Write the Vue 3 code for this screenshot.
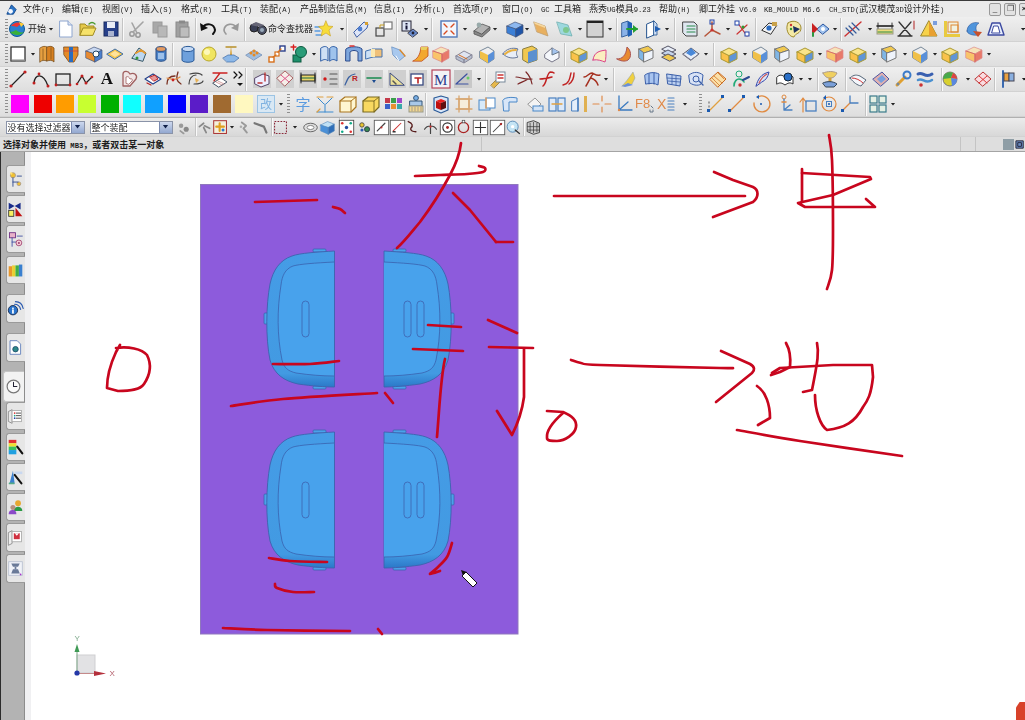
<script setup>
const P = (d, f = 'none', s = 'none', w = 1) => `<path d="${d}" fill="${f}" stroke="${s}" stroke-width="${w}" stroke-linejoin="round" stroke-linecap="round"/>`
const L = (d, s = '#333', w = 1.5) => P(d, 'none', s, w)
const R = (x, y, w, h, f, s = 'none', sw = 1) => `<rect x="${x}" y="${y}" width="${w}" height="${h}" fill="${f}" stroke="${s}" stroke-width="${sw}"/>`
const C = (x, y, r, f, s = 'none', w = 1) => `<circle cx="${x}" cy="${y}" r="${r}" fill="${f}" stroke="${s}" stroke-width="${w}"/>`
const cube = (t, f, s, o = '#44557a') => P('M2 7L10 3l8 3-7 4z', t, o, .7) + P('M2 7l9 3v8l-9-4z', f, o, .7) + P('M11 10l7-4v8l-7 4z', s, o, .7)
const box = (inner) => R(1.5, 1.5, 17, 17, '#fff', '#555') + inner

const I = {
  start: C(10, 10, 7.5, '#2a7fd0', '#0d5a9c') + P('M4 7c3-4 9-5 13-1-3-1-5 0-7 2-2-1-4-1-6-1z', '#e33') + P('M3 13c3 3 9 5 14 0-3 1-6 0-8-2-2 1-4 2-6 2z', '#3ab03a') + P('M12 3l5 2-3 3z', '#fc3'),
  doc: P('M4 2h8l4 4v12H4z', '#fff', '#8ea6d0') + P('M12 2v4h4', '#dce4f2', '#8ea6d0'),
  open: P('M2 16V5h5l2 2h7v3', '#e5c84a', '#a08a20') + P('M2 16l3-7h13l-3 7z', '#f6e26a', '#a08a20') + L('M11 5c2-2 4-2 6 0', '#4a9a30', 1.3),
  save: R(3, 3, 14, 14, '#27408a', '#182a60') + R(6, 3, 8, 6, '#e8ecf6') + R(7, 12, 6, 5, '#aab4d0'),
  cut: C(5, 15, 2.2, 'none', '#9a9a9a', 1.5) + C(11, 16, 2.2, 'none', '#9a9a9a', 1.5) + L('M6 13L16 3M10 14L5 4', '#a4a4a4', 1.6),
  copy: R(3, 3, 9, 11, '#a8a8a8', '#9a9a9a') + R(8, 7, 9, 11, '#b8b8b8', '#9a9a9a'),
  paste: R(4, 3, 12, 15, '#a0a0a0', '#8a8a8a') + R(8, 8, 9, 10, '#bdbdbd', '#8a8a8a') + R(7, 1.5, 6, 3, '#8a8a8a'),
  undo: L('M5 8c3-4 11-4 12 3 0 2-1 3-2 4', '#111', 2) + P('M2 4l1 8 7-3z', '#111'),
  redo: L('M15 8c-3-4-11-4-12 3 0 2 1 3 2 4', '#999', 1.7) + P('M18 4l-1 8-7-3z', '#999'),
  binoc: C(6, 9, 4, '#3a3f55', '#222') + C(14, 11, 4.4, '#4a5064', '#222') + C(14, 11, 2, '#9ab') + P('M2 6l6-3 8 3-4 2z', '#667'),
  star: L('M1 8h5M1 12h5M2 16h6', '#5a9be0', 1.3) + P('M12 2l2 5 5 .5-4 3.5 1.5 6-4.5-3-5 3 1.5-6-4-3.5 5-.5z', '#f7dc3a', '#c8a020', .6),
  pan: P('M3 13L13 3l4 2-1 4L6 18z', '#dfe6f7', '#4060a8') + C(9, 10, 2.4, '#4f7fd0') + R(14, 3, 3, 3, '#d8a030'),
  frames: R(2, 9, 8, 8, 'none', '#444', 1.2) + R(10, 3, 8, 7, '#fff', '#777', 1.2) + L('M6 9V6h4', '#c8a020', 1),
  info: R(2, 2, 9, 10, '#dde4f4', '#223') + R(5.5, 4, 2, 1.5, '#113') + R(5.5, 6.5, 2, 4, '#113') + P('M8 14l5-4 5 4-5 4z', '#6a8dcf', '#223', .8) + C(13, 14, 1.4, '#223'),
  fit: R(2, 2, 16, 16, '#f3f6fc', '#5078b8', 1.4) + L('M5 5l3 3M15 5l-3 3M5 15l3-3M15 15l-3-3', '#d84a20', 1.4),
  printer: P('M2 12l8-7 8 3-8 7z', '#b4b4b4', '#555', .8) + P('M2 12v3l8 3 8-7V8l-8 7z', '#888', '#555', .8) + C(7, 6, 2.4, '#9aa'),
  bluecube: cube('#8db8ef', '#3b7fd6', '#1f55a8'),
  orangecard: P('M3 3l11 4 3 10-11-4z', '#e8b060', '#bb9a6a', .7) + P('M3 3l11 4v2L4 5z', '#f5d8a0'),
  tealcard: P('M3 3l11 3 4 11L7 15z', '#9dd8de', '#6aa', .7) + P('M10 7l6 9', '#fff') + C(12, 11, 3, '#7dc78e'),
  greybox: R(2, 2, 16, 16, '#d2d2d2', '#333') + R(2, 2, 16, 2, '#222'),
  frontin: P('M3 4l6-2v14l-6 2z', '#8ab2e8', '#1c4a8c', .8) + P('M9 2l4 2v12l-4 2z', '#1f5fb5') + L('M8 10h10', '#22a030', 2) + P('M14 6l5 4-5 4z', '#22a030'),
  frontout: P('M4 5l7-3v14l-7 3z', '#fff', '#25548f') + P('M11 2l3 3v11l-3 0z', '#cfe0f5', '#25548f', .8) + P('M12 7l6 3-6 3z', '#1f5fb5'),
  layers: P('M3 3h11l3 3v11H6l-3-3z', '#dfe7f0', '#444') + L('M7 7h8M7 10h8M7 13h8', '#2a8a4a', 1.2),
  wcs: L('M10 11V3M10 11l-7 6M10 11l8 4', '#b6553a', 1.5) + R(8, 1, 4, 4, 'none', '#24a') + C(10, 11, 1.6, '#c33'),
  wcsnode: L('M5 3l10 14M15 6L5 15', '#c33', 1.2) + R(3, 2, 4, 4, '#fff', '#24a') + R(13, 13, 4, 4, '#fff', '#24a') + C(11, 8, 1.6, '#393'),
  eye: P('M2 11l7-7 8 2-6 9z', '#f4f4f4', '#333') + C(9, 9, 2.6, '#2a6bc0') + R(12, 3, 5, 4, '#c9a24a'),
  palette: P('M4 4c5-4 13-1 13 5s-6 5-7 9c-6 0-9-9-6-14z', '#f4e9a6', '#a08c30') + P('M9 7l7 3-6 4z', '#1d2f5f') + C(7, 6, 1.2, '#c33') + C(7, 10, 1.2, '#393'),
  arrowdiamond: P('M7 10l6-5 6 5-6 5z', '#9fc2ee', '#2855a0') + C(13, 10, 2, '#fff') + P('M2 4l6 6-6 6z', '#c82020') + L('M3 14v3', '#2a9a40', 2),
  hatch: L('M2 17L18 3', '#c33', 1.4) + L('M3 9l7 7M6 7l7 7M9 4l7 7', '#345a9a', 1.2),
  dim: L('M2 7h16', '#111', 1.5) + L('M3 4v6M17 4v6', '#333', 1) + R(2, 10, 16, 5, '#eedc7a', '#998') + L('M3 13h14', '#2a8a4a', 1),
  xsec: L('M3 3l12 14M15 3L3 17M2 17h14', '#333', 1.3) + L('M18 2v8', '#b44', 1.2),
  pyramid: P('M10 2l8 15H2z', '#f7d24a', '#9c8520') + P('M10 2v15h8z', '#e8a030') + R(14, 2, 4, 4, '#7a9ede'),
  rcube: R(2, 2, 3, 16, '#e8ca40') + R(2, 15, 16, 3, '#e8ca40') + R(6, 3, 10, 10, '#f1f1e0', '#d83') + R(9, 6, 7, 7, 'none', '#d83'),
  halfsphere: P('M3 12c0-6 6-10 12-8-4 2-4 8 0 12-6 1-12-1-12-4z', '#5095dc', '#244a8c', .5) + P('M9 12l9 1-4 5z', '#c8502a'),
  trapez: P('M6 4h8l4 12H2z', '#e8eefc', '#3c4aa0', 1.4) + P('M8 7h4l2 7H6z', '#fff', '#3c4aa0'),
  plane: R(3, 3, 14, 14, '#fff', '#222', 1.2) + R(3.5, 15.5, 13.5, 2, '#888'),
  block1: P('M3 4c3-2 5-2 7-1v14c-3-1-5-1-7 1z', '#e7a040', '#7a5020', .8) + P('M10 3c3-1 5-1 7 1v14c-2-2-4-2-7-1z', '#d88020', '#7a5020', .8) + L('M6 5v11M14 4v11', '#8a5a20', .8),
  block2: P('M3 3h14v8l-4 7H8l-5-7z', '#e58a28', '#7a4a18', .8) + R(8, 3, 4, 15, '#2a6cc0') + L('M3 7h14', '#c33', .7),
  block3: cube('#c8d8f2', '#e88a30', '#4a80cf') + C(12, 10, 3, '#fff', '#246'),
  block4: P('M2 10l8-5 8 5-8 5z', '#f4c44a', '#3d6ea8') + P('M5 10l5-3 5 3-5 3z', '#ffe39a'),
  block5: P('M3 14L10 4l7 5-3 8z', '#bdd7f0', '#356') + P('M7 9l5-3 4 3', 'none', '#e59a30', 2) + C(8, 14, 1.5, '#393'),
  cyl: P('M5 5v10c0 3 10 3 10 0V5', '#4a82c8', '#2a4f88') + `<ellipse cx="10" cy="5" rx="5" ry="2.4" fill="#e49a60" stroke="#2a4f88"/>` + R(7, 9, 6, 6, '#9cc0ea'),
  cyl2: P('M4 5v11c0 3 12 3 12 0V5', '#6ea0dc', '#2a5a98') + `<ellipse cx="10" cy="5" rx="6" ry="2.6" fill="#c5daf5" stroke="#2a5a98"/>`,
  sphere: C(10, 10, 7, '#f0e560', '#b9a62a') + C(8, 8, 3, '#fdf8b8'),
  cone: P('M10 2L9 11h2z', '#d8a030') + L('M5 3h10', '#b8902a', 1.4) + P('M2 14l5-3h6l5 3-5 4H6z', '#8db8e8', '#3e6aa6', .7),
  dots: P('M2 11l8-5 8 5-8 5z', '#9ebddf', '#57a', .6) + C(7, 9, 1.5, '#e88a20') + C(10, 7, 1.5, '#e88a20') + C(13, 9, 1.5, '#e88a20') + C(10, 11, 1.5, '#e88a20'),
  chain: R(2, 13, 5, 5, '#fff', '#d8701a', 1.4) + R(8, 8, 4, 4, '#fff', '#d8701a', 1.2) + R(13, 2, 5, 5, '#fff', '#2c3f8a', 1.4) + L('M6 13l3-2M11 8l3-3', '#d8701a', 1.3),
  hole: R(4, 11, 8, 7, '#1d8f6b', '#0c5a40') + C(12, 8, 5.5, '#2a9c78', '#0c5a40') + L('M2 3h5M4.500 1v5', '#d82020', 1.4),
  book1: P('M2 4c3-2 5-2 7 0v13c-2-2-4-2-7 0z', '#cfe0f5', '#2f5ea6') + P('M11 4c2-2 4-2 7 0v13c-3-2-5-2-7 0z', '#9fc3ec', '#2f5ea6'),
  book2: P('M2 5c3-3 13-3 16 0v12h-4V8c-2-2-6-2-8 0v9H2z', '#7ea7dd', '#2a4a8c') + L('M6 2h4', '#d33', 1.5),
  split: P('M2 7l7-2v8l-7 2z', '#cde0f5', '#4472b0') + P('M9 5l9 0v8l-9 0z', '#f0c078', '#4472b0') + R(7, 5, 4, 8, '#fbe8b0'),
  blade: P('M4 3l8 3 5 6-6 5-6-6z', '#a8c8ee', '#4a7ab8', .6) + P('M12 6l5 6', '#fff', '#d88a30', 1.4) + P('M8 12l3 5', 'none', '#fff', 1),
  shoe: P('M3 17c4-2 7-5 8-14h7v9l-6 5z', '#f2a830', '#c04a18', .8) + P('M11 3h7l-2 3h-5z', '#e8d060'),
  cage: cube('#f6e3b8', '#f9c46a', '#e87a6a', '#d88') + L('M2 7l9 3v8', '#c55', .6),
  slab: P('M2 12l8-5 8 4-8 5z', '#dfe4f0', '#889') + P('M2 12v3l8 4v-3zM10 16v3l8-5v-3z', '#b8c0d0', '#889') + L('M5 11l8 4', '#d87020', 1),
  tray: P('M3 7l8-4 6 4v8l-6 4-8-5z', '#eee', '#789') + P('M3 7l8 4v8l-8-5z', '#f0c048') + P('M11 11l6-4v8l-6 4z', '#5a90d8'),
  trim: P('M3 10c2-5 10-7 15-5-2 3-2 6 0 8-5 2-11 1-15-3z', '#e8eef8', '#679') + P('M5 10c3-3 8-4 11-4', 'none', '#e8b040', 2),
  blockT: P('M3 5l9-3 5 3v11l-9 3-5-3z', '#f0c850', '#8a7d40') + P('M8 8l9-3v11l-9 3z', '#5b90cf'),
  r2a: P('M3 10L10 4l7 4v6l-7 4-7-4z', '#f5f7fb', '#778') + P('M10 4v7l7-3', '#a4c4ee', '#678'),
  ylw: P('M2 8l8-4 8 4-8 4z', '#f9e48a', '#a93') + P('M2 8v7l8 4v-7z', '#fac24a', '#a93') + P('M10 12v7l8-4V8z', '#5f95d6', '#a93'),
  curve1: P('M3 16c1-9 8-9 13-10 0 5 0 9-1 12-3-1-7-3-12-2z', '#fbeec0', '#d48'),
  curve2: P('M3 15c5 0 9-3 10-12 4 3 5 10 1 13-3 2-8 1-11-1z', '#e88a30', '#a55'),
  flap: P('M3 5l9-3 5 4-9 3z', '#f0c850', '#777') + P('M3 5l5 4v9l-5-4z', '#7fb6e6', '#777') + P('M8 9l9-3v8l-9 4z', '#eef3fb', '#777'),
  stack: P('M3 5l6-3 8 4-6 3z', '#e8eef8', '#556') + P('M3 9l6-3 8 4-6 3z', '#c5d4ec', '#556') + P('M3 13l6-3 8 4-6 3z', '#f0c850', '#556'),
  dia: P('M2 10l8-6 8 6-8 6z', '#e8eef8', '#556') + P('M10 4l5 5-5 3-5-3z', '#4a88d8') + L('M2 10l8 6 8-6', '#889', 1),
  line: L('M3 17L17 3', '#222', 1.2) + C(3, 17, 1.6, '#c12020') + C(17, 3, 1.6, '#c12020'),
  arc: L('M3 14C4 5 12 3 17 17', '#222', 1.4) + C(3, 14, 1.5, '#c12020') + C(17, 17, 1.5, '#c12020') + C(8, 5, 1.4, '#c12020'),
  rect: R(3, 5, 14, 11, 'none', '#222', 1.3) + C(3, 16, 1.4, '#c12020') + C(17, 16, 1.4, '#c12020'),
  spl: L('M2 15L7 7l4 7 6-6', '#222', 1.3) + C(7, 7, 1.5, '#c12020') + C(11, 14, 1.5, '#c12020') + C(2, 15, 1.3, '#c12020') + C(17, 8, 1.3, '#c12020'),
  heart: P('M4 17V5c0-3 5-4 7 0 4-2 8 1 6 5l-6 7z', '#f0e5e5', '#a06060', 1.3) + P('M7 14V8c2-1 3 0 4 2 2-1 3 1 2 2l-3 3z', '#fff', '#a06060', .8),
  sheet: P('M2 10l8-5 8 5-8 5z', '#fff', '#23408a', 1.2) + P('M7 8l5-2 3 4-4 2z', '#e89a9a', '#b22') + L('M4 14l4 2', '#b22', 1.2),
  ss1: L('M3 15c0-6 4-8 8-8M14 3c-2 6-2 9 3 12', '#7a3020', 1.3) + L('M3 9c4 1 8 3 13-1', '#e08a40', 1.2) + C(9, 11, 1.4, '#c22'),
  ss2: L('M4 5c7-2 11 0 12 1M3 15c0-5 3-9 7-9M8 15c4 0 8 0 9-3', '#444', 1.2) + P('M9 9l4 2-3 3z', '#e8b050'),
  ss3: L('M3 4h14M10 4l-6 8', '#c22', 1.3) + P('M3 14l8-5 6 4-8 5z', '#fff', '#456') + L('M6 13l6 3M8 12l6 3', '#c88', .8),
  more: L('M4 3l3 3-3 3M9 3l3 3-3 3', '#111', 1.2) + P('M7 14h6l-3 3z', '#111'),
  bxa: R(1, 1, 18, 18, '#cfcfcf') + P('M3 9l8-4 6 2v8l-8 3-6-3z', '#eef', '#546') + L('M13 4v8', '#b33', 1.4) + L('M6 14h4', '#b33'),
  bxb: R(1, 1, 18, 18, '#d0d0d0') + P('M2 9l8-7 8 7-8 8z', '#f5ede8', '#a66') + L('M6 6l8 7M14 6l-8 7', '#d58', 1),
  bxc: R(1, 1, 18, 18, '#cfcfcf') + R(3, 6, 14, 6, '#e8d56a', '#222') + L('M3 9h14', '#1a6a4a', 1.2) + L('M3 4v10M17 4v10', '#222', 1),
  bxd: R(1, 1, 18, 18, '#cfcfcf') + C(5, 10, 1.7, '#d01818') + L('M10 5h7M10 10h7M10 15h7', '#555', 1.2),
  bxe: R(1, 1, 18, 18, '#cfcfcf') + L('M3 16c3-7 4-10 10-11', '#3a60a0', 1.2) + `<text x="10" y="12" font-size="8" font-weight="700" fill="#b22" font-family="Liberation Sans">R</text>`,
  bxf: R(1, 1, 18, 18, '#cfcfcf') + L('M3 9h14', '#1a8a50', 1.6) + P('M8 11h4l-2 3z', '#1a4a90'),
  bxg: R(1, 1, 18, 18, '#cfcfcf') + P('M3 16V4l14 12z', '#eadf9a', '#3a4a80') + L('M6 12l3 3', '#555'),
  bxh: R(1, 1, 18, 18, '#cfcfcf') + R(3, 5, 12, 11, '#fff', '#3a4a80', 1.3) + L('M7 9h6M10 9v5', '#b22', 1.6),
  bxM: R(1, 1, 18, 18, '#f2f2f6', '#b7455a', 1.2) + `<text x="3" y="16" font-size="15" fill="#2a3a8a" font-family="Liberation Serif">M</text>`,
  bxi: R(1, 1, 18, 18, '#c8c8c8') + L('M3 15L14 5M3 15h12', '#3a50a0', 1.2) + C(15, 9, 1.5, '#6c6'),
  keyb: P('M3 16l8-8 3 3-8 8z', '#e7b84a', '#8a6a20', .7) + R(8, 3, 9, 10, '#fff', '#789') + L('M10 6h5M10 9h5', '#c33'),
  s1: L('M2 8c5 0 8 3 16 2M12 3c4 4 5 7 6 12M4 15c4-2 7-3 10-5', '#7a2525', 1.2),
  s2: L('M6 17c4-3 3-11 7-14 1 0 3 0 4 1M3 10c4 0 8-1 12-2', '#c02020', 1.5),
  s3: L('M4 16c6-1 7-7 8-12M10 15c3-2 5-6 5-11', '#c02020', 1.4),
  s4: L('M2 8c3 0 5-4 8-4 3 1 4 3 8 2M4 17c3-5 5-10 7-12M9 9c3 1 6 4 7 7', '#a53020', 1.5),
  flame: P('M3 17c3-3 7-8 11-14l2 6-3 6z', '#f0d040', '#89a', .5) + P('M3 17l6-3 5 2-8 2z', '#6a8fd8'),
  fan: P('M3 6c4-3 10-3 14-1l-1 11c-3-2-8-2-12-1z', '#a8c4f0', '#3a5ea8') + L('M7 5v10M12 4v11', '#3a5ea8', 1),
  fan2: P('M3 5l14 2-1 10L4 15z', '#bcd0f0', '#3a5ea8') + L('M3 9l14 1M4 12l12 1M8 6v9M12 7v9', '#3a5ea8', .8),
  net: P('M3 6c5-4 10-3 14 0l-1 8c-2 3-8 3-12 0z', '#d8e2f5', '#3a5ea8') + C(10, 10, 3, 'none', '#3a5ea8') + L('M13 12l4 4', '#3a5ea8', 1.4),
  gridy: P('M2 10l8-7 8 7-8 8z', '#fbe0a8', '#c8661a') + L('M6 7l8 7M10 4l6 6M4 9l7 7', '#c8661a', .7),
  man: C(8, 5, 3, '#eee', '#2a7') + P('M3 17c0-5 3-7 5-7 2 0 4 1 5 3', 'none', '#2a7', 1.6) + L('M12 11l6-3', '#2b4a90', 2) + C(9, 16, 1.7, '#c33'),
  wing: P('M3 17c2-7 5-12 13-14-1 5-3 8-7 10z', '#d9e6f8', '#34a') + L('M6 14c2-4 4-7 8-9', '#d05050', 1.1),
  bookr: P('M2 8c3-3 5-2 8 0 3-2 5-3 8 0v7c-3-2-5-1-8 1-3-2-5-3-8-1z', '#fff', '#333') + C(13, 8, 4, '#2a70c8', '#123'),
  mush: P('M3 4c5-2 10-2 14 0-2 4-4 5-7 5s-5-1-7-5z', '#f0d060', '#a98') + R(8.5, 9, 3, 5, '#d0a040') + P('M3 14c4-2 10-2 14 1l-3 3H6z', '#7a9fd8', '#345'),
  surf1: P('M2 9c4-4 7-3 10-2l6 4-5 6c-4-1-7-3-11-8z', '#f4f6fb', '#567') + L('M4 9c4 0 8 2 11 5', '#c33', 1),
  surf2: P('M2 10l9-7 7 7-8 7z', '#e0b0b0', '#4a55a0') + P('M6 10l5-4 4 4-5 4z', '#7aa0dd'),
  tool: L('M4 16l8-8', '#e0a030', 3) + C(14, 6, 3.5, 'none', '#3a7ac8', 2) + C(5, 15, 1.5, '#789'),
  wave: L('M3 5c5-3 7 5 14 0', '#3a60b0', 3) + L('M3 11c5-3 7 5 14 0', '#4a90d0', 2.5) + C(6, 16, 1.8, '#c33'),
  ball: C(10, 10, 7, '#d8d030', '#777') + P('M3 10a7 7 0 0 1 10-6l-2 5z', '#47a94a') + P('M11 9l2-5a7 7 0 0 1 4 6z', '#d44') + P('M11 9l6 1a7 7 0 0 1-5 7z', '#5a88e0'),
  rosy: P('M2 10l8-7 8 7-8 7z', '#f9dce0', '#b33', 1) + L('M6 7l8 7M14 7l-8 7', '#d33', 1),
  flag: L('M5 2v16', '#3a6ab0', 2) + R(6, 4, 5, 8, '#e8a040', '#445') + R(11, 4, 5, 8, '#8bb0e0', '#445'),
  gear2: L('M3 4l6 6M17 4l-6 6M10 10v8M2 18h16', '#3a8ad0', 1) + P('M2 3h6M12 3h6', 'none', '#e0a040', 1.2) + L('M2 18l3-3', '#e0a040', 1.2),
  wire: P('M2 7l5-4h11v10l-5 5H2z', '#fff6d0', '#a9751f', 1.2) + L('M2 7h11v11M13 7l5-4', '#a9751f', 1),
  solid: P('M2 7l5-4h11v10l-5 5H2z', '#f8d860', '#7a6a20', 1.2) + L('M2 7h11v11M13 7l5-4', '#7a6a20', .9),
  swatchgrid: R(2, 4, 5, 5, '#c43a4a') + R(8, 4, 5, 5, '#39a04a') + R(14, 4, 5, 5, '#a048c8') + R(2, 10, 5, 5, '#3a60c8') + R(8, 10, 5, 5, '#e89030') + R(14, 10, 5, 5, '#3aa8a8'),
  brush: C(10, 4, 2.4, '#7ab0e8', '#357') + P('M4 7h12v5H4z', '#a8c8e8', '#357') + R(3, 12, 14, 6, '#f0d890', '#998') + L('M6 13v4M9 13v4M12 13v4M15 13v4', '#a98', 1),
  redcube: P('M3 4l7-2 7 2v12l-7 3-7-3z', '#d8e6f8', '#2a5a98', 1.2) + P('M5 7l5-2 5 2-5 2z', '#ee2020') + P('M5 7l5 2v7l-5-2z', '#c01010') + P('M10 9l5-2v7l-5 2z', '#601010'),
  frame: R(5, 5, 10, 10, '#f6eedb', '#d8a670', 1.3) + L('M2 5h16M2 15h16M5 2v16M15 2v16', '#d8a670', 1.3),
  boxes: R(2, 6, 11, 10, '#d7eafa', '#4a88c8') + R(9, 4, 9, 10, '#ffffff', '#4a88c8') + L('M9 4v10', '#e0a060'),
  lpipe: P('M3 6c2-3 9-3 14-2v4H9v9H4z', '#d8e6f8', '#4a88c8'),
  wedge: P('M3 10l7-6 6 6-6 6z', '#f4f4f4', '#999') + R(8, 12, 10, 5, '#d4e4f6', '#4a88c8'),
  duo: R(2, 4, 7, 13, '#dde9f8', '#4a80c0', 1.2) + R(11, 4, 7, 13, '#dde9f8', '#4a80c0', 1.2) + L('M5 10h10', '#e0a040', 1.4),
  slide: P('M3 7l6-3v13H3z', '#e4eefa', '#4a80c0') + L('M9 4v13', '#4a80c0') + R(15, 2, 3, 16, '#e0b050'),
  cross: L('M1 10h6M13 10h6M10 2v5M10 13v5', '#e08a4a', 1.2),
  axes: L('M5 2v14h13M5 16l9-8', '#3a7ac0', 1.3) + C(5, 16, 1.2, '#e08a4a'),
  f8: `<text x="0" y="14" font-size="13" font-weight="500" fill="#e08a4a" font-family="Liberation Sans">F8</text>` + L('M15 16v2h3v-2M16 12l2 2', '#678', 1),
  xbars: `<text x="0" y="15" font-size="14" fill="#e08a4a" font-family="Liberation Sans">X</text>` + L('M11 4h6M11 7h6M11 10h6M11 13h6M11 16h6', '#4a80c0', 1.2),
  d1: L('M3 17L17 3', '#e0a040', 1.3) + R(1, 15, 3, 3, '#1a5ab0') + R(15, 1, 3, 3, '#1a5ab0') + L('M3 8v1M3 12v1', '#888'),
  d2: L('M3 17L17 3', '#e08a40', 1.2) + R(1, 15, 3, 3, '#1a5ab0') + R(15, 1, 3, 3, '#1a5ab0'),
  d3: P('M7 3A8 8 0 1 1 3 9', 'none', '#e08a40', 1.3) + C(10, 10, 1, '#1a5ab0') + P('M8 1v4l-3-2z', '#1a5ab0'),
  d4: C(9, 3, 2, 'none', '#e08a40') + L('M9 5v11h8M9 16l6-5', '#4a80c0', 1.3) + L('M7 8h4', '#e08a40'),
  d5: L('M5 18V5M2 8l3-4 3 4', '#e08a40', 1.2) + R(8, 7, 10, 10, 'none', '#4a80c0', 1.3),
  d6: C(10, 10, 7, 'none', '#e08a40', 1.2) + R(7.5, 7.5, 5, 5, 'none', '#4a80c0') + C(10, 10, 1, '#1a5ab0') + P('M7 1v5l-3-2z', '#1a5ab0'),
  d7: L('M2 17L10 9', '#e08a40', 1.3) + L('M10 9V2M10 9h8', '#4a80c0', 1.3) + R(1, 15, 3, 3, '#1a5ab0'),
  fourgrid: R(2, 2, 7, 7, '#e4f0e4', '#3a7a8a', 1.2) + R(11, 2, 7, 7, '#e4f0e4', '#3a7a8a', 1.2) + R(2, 11, 7, 7, '#e4f0e4', '#3a7a8a', 1.2) + R(11, 11, 7, 7, '#e4f0e4', '#3a7a8a', 1.2),
  f1: C(6, 8, 2.6, '#9a9a9a') + C(12, 12, 3, '#888') + L('M5 14l4 3', '#999', 2),
  f2: L('M4 9l5-4M10 8l6 3M9 10l3 6', '#888', 2),
  f3: R(2, 2, 15, 15, '#f5f0dc', '#a33', 1.2) + L('M9 5v9M5 9h9', '#e0a020', 2.5) + C(13, 13, 1.8, '#2a7ad0'),
  f4: L('M8 4l5 4-3 3 4 5', '#999', 2.2) + C(7, 9, 1.5, '#aaa'),
  f5: L('M3 5l11 4 3 7', '#777', 2.6),
  dashbox: `<rect x="3" y="3" width="14" height="14" fill="none" stroke="#8a2a3a" stroke-width="1.3" stroke-dasharray="2 1.5"/>`,
  f6: `<ellipse cx="10" cy="10" rx="8" ry="5" fill="#ddd" stroke="#555"/>` + `<ellipse cx="10" cy="10" rx="4" ry="2.4" fill="#fff" stroke="#777"/>`,
  f7: cube('#bfe0f5', '#4a90d8', '#2f6eb8', '#5588bb'),
  fb1: R(1.500, 1.500, 17, 17, '#fff', '#444') + C(5, 5, 1.5, '#d33') + C(15, 5, 1.5, '#1a8') + C(5, 15, 1.5, '#1a8') + C(15, 15, 1.5, '#d33') + C(10, 10, 2, '#224aa0'),
  fb2: C(7, 7, 2.6, '#e8c530', '#444') + C(13, 12, 3, '#3a8a50', '#234') + C(7, 13, 1.8, '#2a5ab0'),
  fb3: box(L('M5 14L14 5', '#444', 1.4) + C(10, 10, 1.2, '#c33')),
  fb4: box(L('M5 14L14 5', '#c33', 1.2) + L('M5 15h2', '#333', 2)),
  fb5: L('M5 3c5 2 6 5 3 8-1 3 3 4 6 4', '#551a1a', 1.6),
  fb6: L('M3 12c3-5 11-5 14 0M10 5v12', '#444', 1.4) + C(10, 9, 1.3, '#c33'),
  fb7: box(C(10, 10, 5.5, 'none', '#333', 1.3) + C(10, 10, 1.7, '#a22')),
  fb8: C(10, 10, 6, 'none', '#a22', 1.6) + R(8.5, 1.5, 3, 3, '#fff', '#444', .8),
  fb9: box(L('M10 4v12M4 10h12', '#333', 1.3)),
  fb10: box(L('M5 15L15 5', '#444', 1.2) + C(14, 6, 1.4, '#a22')),
  fb11: C(9, 9, 6.5, '#c4e4f4', '#4a80b0') + L('M12 13l5 4', '#333', 1.6) + C(9, 9, 2, '#fff'),
  fb12: P('M3 4l7-2 7 3v11l-7 2-7-3z', '#ccc', '#333') + L('M6 5v10M10 4v12M14 5v10M3 9l14 0M3 13l14 0', '#333', .8),
  t1: C(7, 5, 3, '#f0c030', '#a98') + C(14, 15, 2.2, '#f0c030', '#a98') + C(5, 3, 1.4, '#ffe070') + L('M7 8v10M7 13h6M12 6h5', '#23408a', 1),
  t2: P('M2 2l7 4 7-4v8l-7-4-7 4z', '#1a2c8a') + R(2, 11, 6, 7, '#f8f060', '#333') + P('M10 18V8l8 10z', '#c01010'),
  t3: R(3, 2, 7, 6, '#e8b0c8', '#6a2a80') + L('M6 8v10M6 13h6M12 6h6', '#3a4aa0', 1) + C(14, 14, 3.4, '#f4d0d8', '#a04070') + C(14, 14, 1.2, '#a04070'),
  t4: R(2, 5, 4, 12, '#e8952a') + R(6, 4, 4, 13, '#e8d030') + R(10, 4, 4, 13, '#3fae45') + R(14, 3, 4, 14, '#3a80d0'),
  t5: C(7, 12, 5.5, '#2a74cc', '#124') + R(6, 9, 2, 1.5, '#fff') + R(6, 11, 2, 5, '#fff') + P('M9 5c4 0 6 2 7 6M10 2c5 0 8 3 9 8', 'none', '#2a5ab0', 1.4),
  t6: P('M4 2h8l4 4v12H4z', '#fff', '#5a7ab8') + C(10, 12, 3.2, '#2f8a8a', '#1a4a6a'),
  clock: C(10, 10, 7.5, '#fafafa', '#777', 1.4) + L('M10 5v5h4', '#223', 1.2),
  t8: P('M2 4l4-2v16l-4-2z', '#e8e8e8', '#888') + R(6, 3, 11, 13, '#fff', '#aaa') + C(9, 6, 1, '#d33') + C(9, 9, 1, '#2a8') + C(9, 12, 1, '#24a') + L('M11 6h5M11 9h5M11 12h5', '#333', 1),
  t9: R(2, 1, 9, 4, '#e03030') + R(2, 5, 9, 4, '#f0e030') + R(2, 9, 9, 4, '#3ac060') + R(2, 13, 9, 5, '#20a0e0') + L('M12 9l6 8', '#111', 2.5),
  t10: P('M7 2l2 15H3z', '#3a80d0') + R(9, 3, 9, 3, '#c9d8f0') + L('M9 7l8 10', '#111', 2.4) + L('M3 17h5', '#5a8', 2),
  t11: C(13, 5, 3.4, '#e8a830') + P('M8 14c0-4 3-5 5-5s5 1 5 5z', '#2a9a45') + C(7, 10, 3, '#b89080') + P('M2 18c0-4 2-5 5-5s4 2 4 5z', '#8a4ac8'),
  t12: P('M2 4l4-2v15l-4 2z', '#eee', '#888') + R(6, 3, 11, 12, '#fff', '#aaa') + R(8, 5, 7, 7, '#d03040') + P('M9 5l2.500 3 2.500-3z', '#fff'),
  t13: R(2, 2, 16, 16, '#f0f2f8', '#b8c0d0') + P('M5 4h10l-2 4h-6zM7 11h6l2 5H5z', '#6a7a98') + R(9, 8, 2, 3, '#6a7a98') + C(16, 17, 1, '#a3c'),
}

const COL = { s: 2, g: 3, v: 5 }
const parse = (src) => {
  let end = 0
  return src.trim().split(/\s+/).map((tok) => {
    const at = tok.indexOf(':')
    const c = Number(tok.slice(0, at))
    const k = tok.slice(at + 1)
    let kind = 'icon', w = 20, color = null, text = null
    if (k === 's' || k === 'g' || k === 'v') { kind = k; w = COL[k] }
    else if (k.startsWith('#')) { kind = 'sw'; w = 18; color = k }
    else if (k === 'TA') { kind = 'bigA'; text = 'A'; w = 20 }
    else if (k === 'T字') { kind = 'zi'; text = '字'; w = 20 }
    else if (k === 'T改') { kind = 'gai'; text = '改'; w = 18 }
    else if (k.startsWith('T')) { kind = 'text'; text = k.slice(1); w = text.length * 9 }
    else if (k === 'sel1') { kind = 'sel'; text = '没有选择过滤器'; w = 79 }
    else if (k === 'sel2') { kind = 'sel'; text = '整个装配'; w = 83 }
    const left = c - w / 2
    const item = { kind, k, w, color, text, gap: left - end }
    end = left + w
    return item
  })
}

const rows = [
  '6:g 17:start 37:T开始 51:v 66:doc 88:open 111:save 123:s 137:cut 160:copy 182:paste 196:s 208:undo 231:redo 245:s 258:binoc 290.500:T命令查找器 324:star 342:v 347:s 361:pan 384:frames 397:s 410:info 426:v 432:s 449:fit 465:v 482:printer 495:v 515:bluecube 527:v 541:orangecard 564:tealcard 580:v 595:greybox 610:v 617:s 629:frontin 653:frontout 667:v 675:s 690:layers 712:wcs 728:v 742:wcsnode 756:s 770:eye 794:palette 805:s 820:arrowdiamond 835:v 841:s 853:hatch 870:v 885:dim 906:xsec 929:pyramid 952:rcube 974:halfsphere 996:trapez 1023:v',
  '6:g 18:plane 33:v 47:block1 71:block2 94:block3 115:block4 139:block5 161:cyl 173:s 188:cyl2 209:sphere 231:cone 254:dots 277:chain 299:hole 314:v 329:book1 354:book2 374:split 398:blade 420:shoe 441:cage 464:slab 487:tray 510:trim 530:blockT 552:r2a 565:s 579:ylw 600:curve1 624:curve2 646:flap 669:stack 691:dia 706:v 714:s 729:ylw 745:v 760:tray 782:flap 805:ylw 820:v 835:cage 858:ylw 874:v 889:flap 905:v 920:tray 935:v 950:ylw 974:cage 989:v',
  '6:g 18:line 41:arc 63:rect 85:spl 107:TA 129:heart 153:sheet 174:ss1 196:ss2 220:ss3 240:more 246:s 262:bxa 285:bxb 308:bxc 330:bxd 352:bxe 374:bxf 397:bxg 418:bxh 441:bxM 463:bxi 479:v 486:s 498:keyb 524:s1 547:s2 569:s3 592:s4 606:v 614:s 629:flame 652:fan 674:fan2 696:net 718:gridy 741:man 763:wing 785:bookr 801:v 810:v 818:s 830:mush 846:s 858:surf1 881:surf2 903:tool 925:wave 942:s 950:ball 968:v 983:rosy 995:s 1008:flag 1024:v',
  '6:g 20:#ff00ff 42.500:#ee0000 64.500:#ff9c00 87:#c8ff30 109.500:#00b000 131.500:#10ffff 154:#10a0ff 176.500:#0000ff 198.500:#5b1cc8 221.500:#a06a30 243.500:#fff8c0 266:T改 281:v 288:g 303:T字 325:gear2 348:wire 371:solid 393:swatchgrid 416:brush 426:s 441:redcube 464:frame 487:boxes 510:lpipe 535:wedge 557:duo 579:slide 602:cross 624:axes 645:f8 667:xbars 685:v 700:g 716:d1 737:d2 761:d3 785:d4 808:d5 829:d6 850:d7 866:s 878:fourgrid 893:v',
].map(parse)

const filterRow = parse('45:sel1 131:sel2 186:f1 196:s 206:f2 222:f3 232:v 245:f4 262:f5 272:s 282:dashbox 295:v 312:f6 329:f7 340:s 348:fb1 366:fb2 383:fb3 399:fb4 414:fb5 432:fb6 449:fb7 465:fb8 482:fb9 499:fb10 515:fb11 524:s 535:fb12')

const seg = (t) => t.split(/([\x00-\x7f]+)/).filter(Boolean).map((s) => ({ s, lat: /^[\x00-\x7f]+$/.test(s) }))

const menuSrc = [
  ['文件(F)', 23], ['编辑(E)', 62], ['视图(V)', 102], ['插入(S)', 141], ['格式(R)', 181], ['工具(T)', 221], ['装配(A)', 260],
  ['产品制造信息(M)', 300], ['信息(I)', 374], ['分析(L)', 414], ['首选项(P)', 453], ['窗口(O)', 502], ['GC 工具箱', 541],
  ['燕秀UG模具9.23', 589], ['帮助(H)', 659], ['卿工外挂 V6.0', 699], ['KB_MOULD M6.6', 764], ['CH_STD(武汉模茂3D设计外挂)', 829],
]
const menu = menuSrc.map(([t, x], i) => ({ parts: seg(t), w: (menuSrc[i + 1] ? menuSrc[i + 1][1] : 941) - x }))
const status = seg('选择对象并使用 MB3，或者双击某一对象')

const tabSrc = [
  [165, 28, 't1'], [195, 28, 't2'], [225, 28, 't3'], [256, 28, 't4'], [294, 29, 't5'], [333, 29, 't6'], [371, 31, 'clock', true],
  [402, 28, 't8'], [433, 28, 't9'], [463, 28, 't10'], [493, 28, 't11'], [523, 29, 't12'], [554, 29, 't13'],
]
const tabs = tabSrc.map(([y, h, i, on], n) => ({ h, i, on, gap: y - (n ? tabSrc[n - 1][0] + tabSrc[n - 1][1] : 152) }))

/* Freehand strokes: point lists are turned into smooth curves; a '!' keeps the corners sharp. */
const smooth = (d) => {
  if (d.includes('C')) return d
  const sharp = d.endsWith('!')
  const n = d.match(/[\d.]+/g).map(Number)
  const p = []
  for (let i = 0; i < n.length; i += 2) p.push([n[i], n[i + 1]])
  if (sharp) return 'M' + p.map((q) => q.join(' ')).join('L')
  let out = `M${p[0][0]} ${p[0][1]}`
  for (let i = 0; i < p.length - 1; i++) {
    const a = p[Math.max(i - 1, 0)], b = p[i], c = p[i + 1], e = p[Math.min(i + 2, p.length - 1)]
    out += `C${b[0] + (c[0] - a[0]) / 6} ${b[1] + (c[1] - a[1]) / 6} ${c[0] - (e[0] - b[0]) / 6} ${c[1] - (e[1] - b[1]) / 6} ${c[0]} ${c[1]}`
  }
  return out
}
const ink = [
  'M415 176L440 175 467 174 483 172 485 168 479 166',
  'M461 143C460 152 458 160 450 175C442 190 435 202 420 222C410 234 404 242 397 248',
  'M453 193L470 210 496 242!',
  'M496 242L513 242',
  'M554 196L745 196',
  'M714 172L733 180 753 187C759 190 759 197 753 202L713 217',
  'M829 135L832 160 833 230 832 270 827 289',
  'M802 169L802 202',
  'M802 173L870 177 871 179 833 195 798 203 805 207 830 207 875 207 866 199!',
  'M255 202L317 200',
  'M333 207L340 209 345 213',
  'M273 364L310 364 339 361',
  'M231 406L283 399 377 393',
  'M385 393L393 403',
  'M428 325L461 327',
  'M413 349L463 351',
  'M445 359C441 375 440 400 437 437',
  'M488 320L517 333',
  'M489 347L533 348',
  'M524 349L524 397C522 412 517 425 512 435L497 411',
  'M547 411L563 412C572 416 577 420 576 427C575 434 565 441 557 441C552 441 547 441 547 438C546 430 555 420 563 413',
  'M571 360L581 363 600 365 720 368 731 368',
  'M721 351L750 364C755 367 755 370 752 373L716 402',
  'M786 343C790 350 791 357 790 367L780 372 771 375',
  'M772 373L780 368 833 365 872 365 873 377C871 395 868 400 863 407C855 422 845 428 827 430C820 425 815 410 815 395',
  'M817 343C819 352 818 360 812 390L803 392',
  'M757 386C766 392 770 405 770 418L758 425',
  'M737 430L800 441 902 456',
  'M120 345L116 352C110 365 107 378 107 388L118 391C130 391 140 390 144 384C150 375 152 365 147 355C142 349 128 346 116 348',
  'M269 558L290 561 327 562',
  'M275 584L277 588 293 592 314 592',
  'M452 543L447 557 437 568 430 574 440 571',
  'M223 628L267 630 350 631',
  'M378 629L382 634',
].map(smooth)
const halfL = 'M334.500 251C318 252 300 253 292 256C280 260 273 270 270 284C266 305 265.500 338 270 360C274 374 284 381 298 384C312 386 325 387 334.500 387Z'
const innerL = 'M334 262C315 263 300 264 293 266C285 269 282 276 281 285C277 310 277 335 282 360C284 368 288 371 296 373C310 375 322 376 334 376'
const halfR = 'M384 251C400 252 418 253 426 256C438 260 445 270 448 284C452 305 452.500 338 448 360C444 374 434 381 420 384C406 386 393 387 384 387Z'
const innerR = 'M384 262C403 263 418 264 425 266C433 269 436 276 437 285C441 310 441 335 436 360C434 368 430 371 422 373C408 375 396 376 384 376'
</script>

<template>
  <div class="app">
    <div class="chrome">
      <div class="menu">
        <svg class="mlogo" viewBox="0 0 14 14"><path d="M2 12L7 2l5 5-3 5z" fill="#2a74c8" stroke="#174a8a"/><circle cx="6" cy="9" r="2.500" fill="#f4f8ff"/></svg>
        <span v-for="(m, i) in menu" :key="i" class="mitem" :style="{ width: m.w + 'px' }"><span v-for="(p, j) in m.parts" :key="j" :class="{ lat: p.lat }">{{ p.s }}</span></span>
        <div class="winbtns">
          <span class="wb">_</span><span class="wb">❐</span><span class="wb close">×</span>
        </div>
      </div>

      <div v-for="(row, r) in rows" :key="r" class="tbar">
        <template v-for="(it, n) in row" :key="n">
          <i v-if="it.kind === 'g'" class="grip" :style="{ marginLeft: it.gap + 'px' }"></i>
          <i v-else-if="it.kind === 's'" class="sep" :style="{ marginLeft: it.gap + 'px' }"></i>
          <i v-else-if="it.kind === 'v'" class="drop" :style="{ marginLeft: it.gap + 'px' }"></i>
          <i v-else-if="it.kind === 'sw'" class="swatch" :style="{ marginLeft: it.gap + 'px', background: it.color }"></i>
          <span v-else-if="it.kind === 'bigA'" class="bigA" :style="{ marginLeft: it.gap + 'px' }">A</span>
          <span v-else-if="it.kind === 'zi'" class="zi" :style="{ marginLeft: it.gap + 'px' }">字</span>
          <span v-else-if="it.kind === 'gai'" class="gai" :style="{ marginLeft: it.gap + 'px' }">改</span>
          <span v-else-if="it.kind === 'text'" class="ttext" :style="{ marginLeft: it.gap + 'px' }">{{ it.text }}</span>
          <svg v-else class="ic" viewBox="0 0 20 20" :style="{ marginLeft: it.gap + 'px' }" v-html="I[it.k]"></svg>
        </template>
      </div>

      <div class="tbar filter">
        <template v-for="(it, n) in filterRow" :key="n">
          <div v-if="it.kind === 'sel'" class="select" :style="{ marginLeft: it.gap + 'px', width: it.w + 'px' }">
            <span class="seltext">{{ it.text }}</span><i class="selbtn"></i>
          </div>
          <i v-else-if="it.kind === 's'" class="sep" :style="{ marginLeft: it.gap + 'px' }"></i>
          <i v-else-if="it.kind === 'v'" class="drop" :style="{ marginLeft: it.gap + 'px' }"></i>
          <svg v-else class="ic sm" viewBox="0 0 20 20" :style="{ marginLeft: it.gap + 'px' }" v-html="I[it.k]"></svg>
        </template>
      </div>

      <div class="status">
        <span class="stext"><span v-for="(p, j) in status" :key="j" :class="{ latb: p.lat }">{{ p.s }}</span></span>
        <i class="cell c1"></i><i class="cell c2"></i><i class="cell c3"></i>
        <i class="sgrey"></i>
        <svg class="sicon" viewBox="0 0 12 12"><path d="M1 2h8v8H1zM3 4h4v4H3z" fill="#6c8ec4" stroke="#223"/></svg>
      </div>
    </div>

    <div class="main">
      <aside class="rail">
        <div v-for="(t, i) in tabs" :key="i" class="tab" :class="{ on: t.on }" :style="{ height: t.h + 'px', marginTop: t.gap + 'px' }">
          <svg class="railic" viewBox="0 0 20 20" v-html="I[t.i]"></svg>
        </div>
      </aside>
      <div class="strip"></div>
      <svg class="view" viewBox="31 152 994 568">
        <defs>
          <linearGradient id="rim" x1="0" y1="0" x2="0" y2="1">
            <stop offset="0" stop-color="#459ce6" />
            <stop offset=".9" stop-color="#429ae2" />
            <stop offset="1" stop-color="#2b78c8" />
          </linearGradient>
        </defs>
        <rect x="200.500" y="184.500" width="317.500" height="449.500" fill="#8d5bdc" stroke="#8f78bd" />
        <g v-for="dy in [0, 181]" :key="dy" :transform="`translate(0 ${dy})`" class="part">
          <rect x="313" y="249" width="13" height="3" rx="1" />
          <rect x="313" y="386" width="13" height="3" rx="1" />
          <rect x="264" y="313" width="4" height="11" rx="1" />
          <path :d="halfL" fill="url(#rim)" />
          <path :d="innerL" class="inner" />
          <rect x="302" y="301" width="7" height="36" rx="3.500" class="slot" />
          <rect x="393" y="249" width="13" height="3" rx="1" />
          <rect x="393" y="386" width="13" height="3" rx="1" />
          <rect x="450" y="313" width="4" height="11" rx="1" />
          <path :d="halfR" fill="url(#rim)" />
          <path :d="innerR" class="inner" />
          <rect x="404" y="301" width="7" height="36" rx="3.500" class="slot" />
          <rect x="417" y="301" width="7" height="36" rx="3.500" class="slot" />
        </g>
        <rect x="77" y="655" width="18" height="18" fill="#e2e2e4" stroke="#cfcfd2" />
        <path d="M77 673V650" stroke="#7ea88a" fill="none" />
        <path d="M74.500 652L77 644l2.500 8z" fill="#3f9a55" />
        <path d="M77 673.500H101" stroke="#c58a8a" fill="none" />
        <path d="M94 671l12 2.500-12 2.500z" fill="#b4303c" />
        <circle cx="77" cy="673" r="2.600" fill="#2438a8" />
        <text x="74.500" y="641" class="axis yax">Y</text>
        <text x="109.500" y="676" class="axis xax">X</text>
      </svg>
      <i class="corner"></i>
    </div>

    <svg class="ink" viewBox="0 0 1025 720">
      <path v-for="(d, i) in ink" :key="i" :d="d" />
      <g class="pencil">
        <path d="M461 570l6 2-4 4z" fill="#111" />
        <path d="M466 572l11 11-4 4-11-11z" fill="#fff" stroke="#111" />
      </g>
    </svg>
  </div>
</template>

<style scoped>
.app {
  position: relative;
  width: 1025px;
  height: 720px;
  overflow: hidden;
  display: flex;
  flex-direction: column;
  background: #fff;
  font-family: "Noto Sans CJK SC", "Liberation Sans", sans-serif;
  color: #1c1c1c;
}
.chrome {
  flex: none;
  border-top: 1px solid #3a3a3a;
  background: #e0e0e0;
  filter: blur(0.45px);
}
.menu {
  height: 16px;
  display: flex;
  align-items: center;
  padding-left: 5px;
  background: #ebebeb;
  font-size: 9px;
  line-height: 16px;
  white-space: nowrap;
  box-sizing: border-box;
}
.mlogo { width: 13px; height: 13px; flex: none; margin-right: 5px; }
.mitem { flex: none; display: block; }
.lat { font-family: "Liberation Mono", monospace; font-size: 7.2px; }
.winbtns { display: flex; gap: 3px; margin-left: 48px; flex: none; }
.wb {
  width: 10px;
  height: 11px;
  border: 1px solid #999;
  border-radius: 2px;
  background: #e2e2e2;
  font: 8px/10px "Liberation Sans", sans-serif;
  text-align: center;
  color: #333;
  box-sizing: content-box;
}
.wb.close { width: 8px; font-weight: 700; color: #222; }
.tbar {
  height: 25px;
  display: flex;
  align-items: center;
  overflow: hidden;
  background: linear-gradient(#efefef, #dedede);
  border-bottom: 1px solid #d2d2d2;
  box-sizing: border-box;
}
.tbar > * { flex: none; }
.ic { width: 20px; height: 20px; display: block; overflow: visible; }
.ic.sm { width: 17px; height: 17px; margin-right: 3px; }
.grip { width: 3px; height: 20px; background: repeating-linear-gradient(#8f8f8f 0 1px, transparent 1px 3px); }
.sep { width: 2px; height: 23px; background: linear-gradient(90deg, #c4c4c4 50%, #fafafa 50%); }
.drop { width: 5px; height: 3px; background: #222; clip-path: polygon(0 0, 100% 0, 50% 100%); }
.swatch { width: 18px; height: 18px; }
.ttext { font-size: 9px; line-height: 20px; white-space: nowrap; }
.bigA { width: 20px; text-align: center; font: 700 17px/20px "Liberation Serif", serif; color: #111; }
.zi { width: 20px; height: 20px; text-align: center; font-size: 15px; line-height: 20px; color: #5a9be0; }
.gai {
  width: 18px;
  height: 18px;
  box-sizing: border-box;
  text-align: center;
  font-size: 12px;
  line-height: 15px;
  color: #7fb2e0;
  background: #d9e8f4;
  border: 1px solid #9cc4e4;
}
.filter {
  height: 20px;
  border-top: 1px solid #b0b0b0;
  background: linear-gradient(#ececec, #d8d8d8);
}
.select {
  height: 13px;
  display: flex;
  background: #fff;
  border: 1px solid #8a93a8;
  box-sizing: border-box;
  font-size: 9px;
  line-height: 11px;
  overflow: hidden;
}
.seltext { flex: 1; padding-left: 1px; white-space: nowrap; }
.selbtn {
  width: 12px;
  flex: none;
  background: linear-gradient(#cdd8ee, #93a8d0);
  border-left: 1px solid #7a8ab0;
  position: relative;
}
.selbtn::after {
  content: "";
  position: absolute;
  left: 3px;
  top: 3px;
  width: 6px;
  height: 4px;
  background: #10204a;
  clip-path: polygon(0 0, 100% 0, 50% 100%);
}
.status {
  position: relative;
  height: 15px;
  display: flex;
  align-items: center;
  background: #dedede;
  border-bottom: 1px solid #a4a4a4;
  box-sizing: border-box;
  padding-left: 3px;
  font-size: 9px;
  font-weight: 700;
  white-space: nowrap;
}
.latb { font-family: "Liberation Mono", monospace; font-size: 7.2px; }
.cell { position: absolute; top: 0; bottom: 0; width: 1px; background: #c4c4c4; }
.c1 { left: 481px; }
.c2 { left: 960px; }
.c3 { left: 975px; }
.sgrey { position: absolute; left: 1003px; top: 2px; width: 11px; height: 11px; background: #8f9ea6; }
.sicon { position: absolute; left: 1015px; top: 2px; width: 11px; height: 11px; }
.main { flex: 1; display: flex; min-height: 0; position: relative; }
.rail {
  flex: none;
  width: 25px;
  box-sizing: border-box;
  background: #b3b3b3;
  border-left: 1.5px solid #2c2c2c;
  border-right: 1px solid #8c8c8c;
  padding-left: 4.5px;
  display: flex;
  flex-direction: column;
  align-items: flex-start;
}
.tab {
  flex: none;
  width: 19px;
  box-sizing: border-box;
  background: #e6e6e6;
  border: 1px solid #9a9a9a;
  border-right: 0;
  border-radius: 3px 0 0 3px;
  display: flex;
  align-items: center;
  justify-content: center;
}
.tab.on {
  width: 21.500px;
  margin-left: -3px;
  background: #f2f2f2;
  border-color: #c4c4c4;
}
.railic { width: 17px; height: 17px; display: block; }
.strip { flex: none; width: 6px; background: #f0f0f2; }
.view { flex: 1; min-width: 0; height: 100%; display: block; background: #fff; filter: blur(0.3px); }
.part rect { fill: #4aa2ea; stroke: #3e62ae; stroke-width: .8; }
.part path { stroke: #3e62ae; stroke-width: .9; }
.part .inner { fill: #48a2ec; stroke: #3a62ae; stroke-width: .8; }
.part .slot { fill: none; }
.axis { font: 8px "Liberation Sans", sans-serif; }
.yax { fill: #7da88a; }
.xax { fill: #b4606c; }
.ink {
  position: absolute;
  left: 0;
  top: 0;
  width: 1025px;
  height: 720px;
  pointer-events: none;
  filter: blur(0.3px);
}
.ink > path {
  fill: none;
  stroke: #c8061e;
  stroke-width: 2.700;
  stroke-linecap: round;
  stroke-linejoin: round;
}
.corner {
  position: absolute;
  right: 0;
  bottom: 0;
  width: 9px;
  height: 18px;
  background: #d8422a;
  clip-path: polygon(40% 0, 100% 0, 100% 100%, 0 100%, 0 30%);
}
</style>
